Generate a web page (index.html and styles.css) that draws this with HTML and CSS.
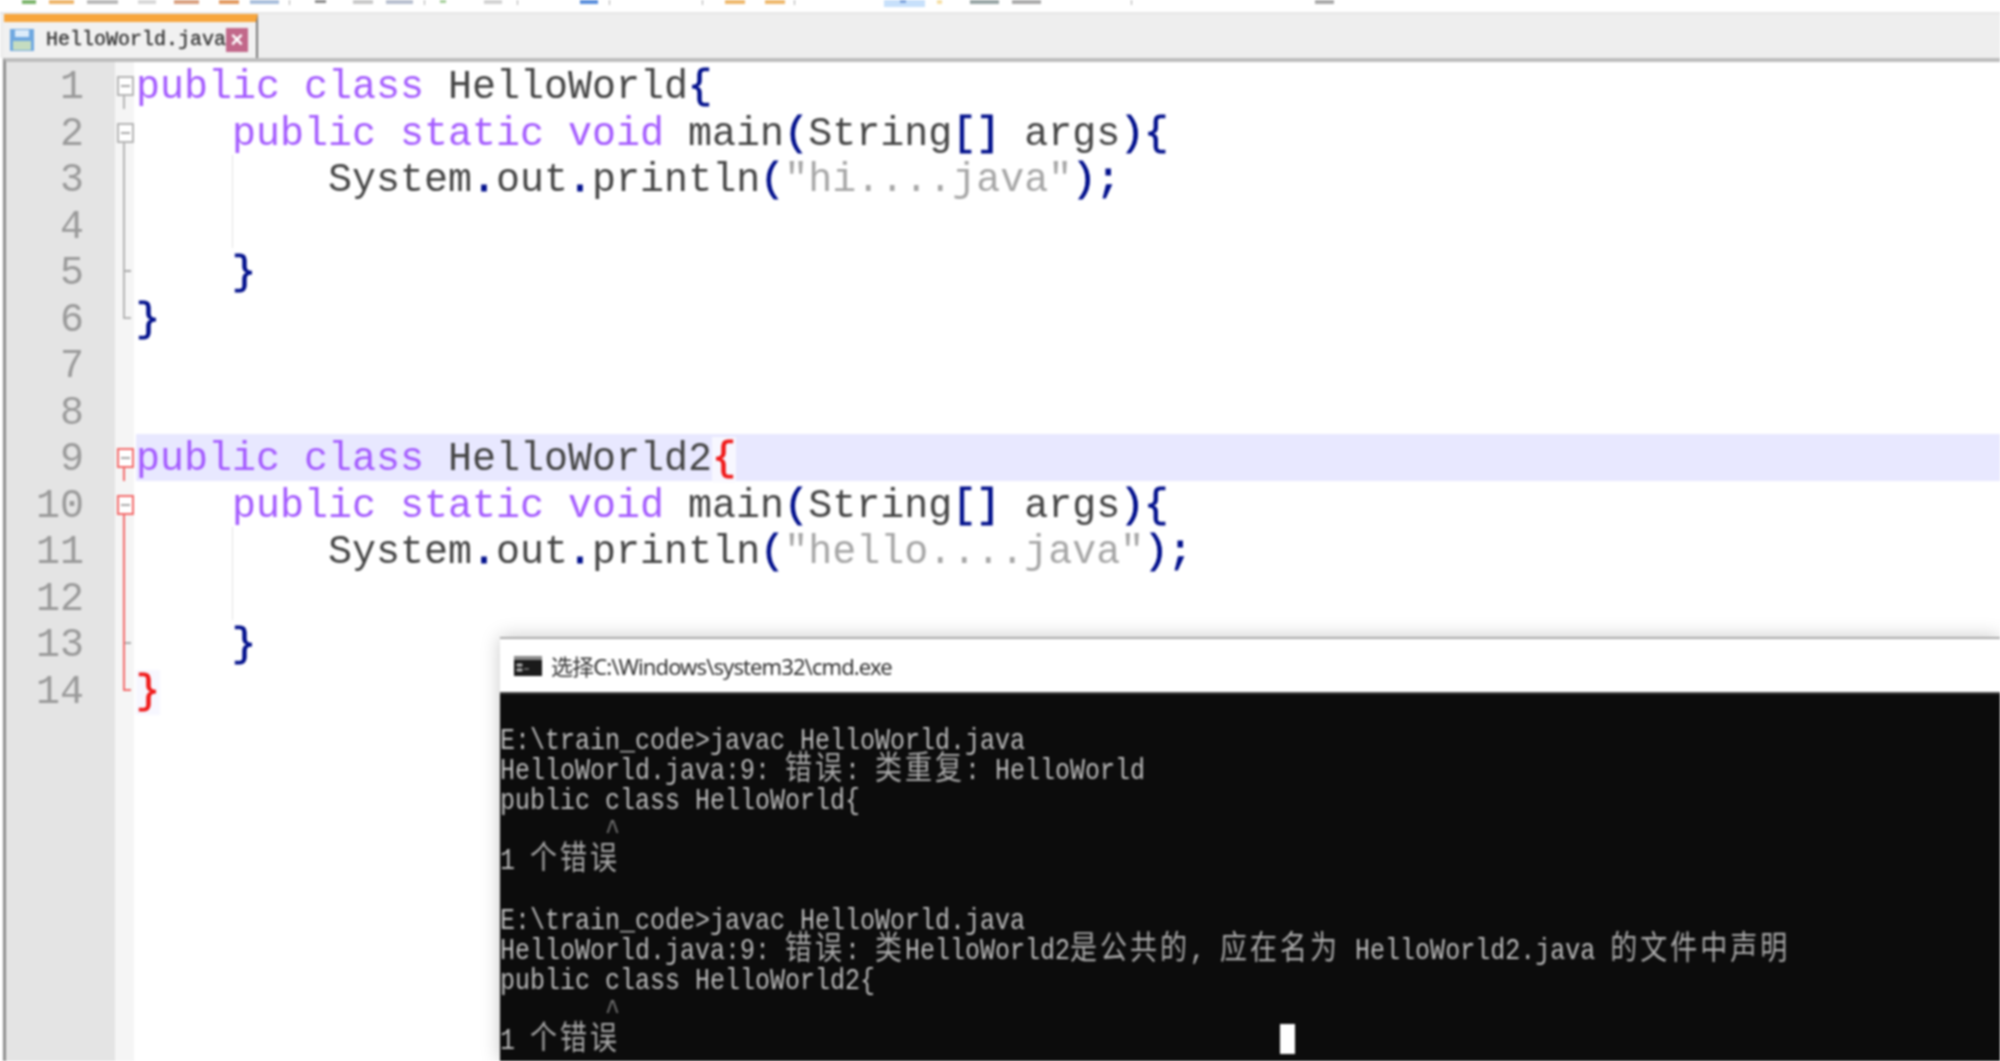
FILE: index.html
```html
<!DOCTYPE html>
<html lang="zh">
<head>
<meta charset="utf-8">
<title>HelloWorld.java</title>
<link rel="stylesheet" href="styles.css">
</head>
<body>
<div class="screen">
  <div class="toolbar">
    <svg class="toolbar-art" width="2000" height="13" viewBox="0 0 2000 13">
      <rect x="22" y="0" width="14" height="4" fill="#7cb56c"/>
      <rect x="49" y="0" width="25" height="4" fill="#eeb56a"/>
      <rect x="87" y="0" width="31" height="4" fill="#b9b9b9"/>
      <rect x="138" y="0" width="18" height="4" fill="#d8d8d8"/>
      <rect x="174" y="0" width="25" height="4" fill="#d9a080"/>
      <rect x="219" y="0" width="20" height="4" fill="#e39a60"/>
      <rect x="250" y="0" width="29" height="4" fill="#a9bfdc"/>
      <rect x="289" y="0" width="1" height="5" fill="#aaa"/>
      <rect x="315" y="0" width="11" height="3" fill="#888"/>
      <rect x="353" y="0" width="20" height="4" fill="#c8c8c8"/>
      <rect x="386" y="0" width="27" height="4" fill="#b7bfcf"/>
      <rect x="424" y="0" width="1" height="5" fill="#aaa"/>
      <rect x="440" y="0" width="6" height="3" fill="#a5cf9a"/>
      <rect x="484" y="0" width="18" height="4" fill="#d2d2d2"/>
      <rect x="517" y="0" width="1" height="5" fill="#aaa"/>
      <rect x="580" y="0" width="18" height="4" fill="#5a8fdc"/>
      <rect x="609" y="0" width="1" height="5" fill="#aaa"/>
      <rect x="702" y="0" width="1" height="5" fill="#aaa"/>
      <rect x="725" y="0" width="20" height="4" fill="#efb86c"/>
      <rect x="765" y="0" width="20" height="4" fill="#efb86c"/>
      <rect x="794" y="0" width="1" height="5" fill="#aaa"/>
      <rect x="884" y="0" width="41" height="7" fill="#c7e0fb"/>
      <rect x="900" y="0" width="6" height="3" fill="#7ea4dd"/>
      <rect x="937" y="0" width="5" height="4" fill="#f6dfa4"/>
      <rect x="970" y="0" width="29" height="4" fill="#97a5a5"/>
      <rect x="1012" y="0" width="29" height="4" fill="#aaaaaa"/>
      <rect x="1131" y="0" width="1" height="5" fill="#aaa"/>
      <rect x="1315" y="0" width="19" height="4" fill="#a9a9a9"/>
    </svg>
  </div>
  <div class="tabbar">
    <div class="tab">
      <svg class="tab-icon" width="24" height="22" viewBox="0 0 24 22">
        <rect x="0" y="0" width="24" height="22" fill="#6fa8e0"/>
        <rect x="5" y="1" width="14" height="7" fill="#dcecfa"/>
        <rect x="3" y="12" width="18" height="9" fill="#c5dcc0"/>
      </svg>
      <span class="tab-name">HelloWorld.java</span>
      <span class="tab-close">×</span>
    </div>
  </div>
  <div class="editor">
    <div class="row"><span class="num">1</span><span class="fold box first"></span><span class="code"><span class="k">public class</span> HelloWorld<span class="o">{</span></span></div>
    <div class="row"><span class="num">2</span><span class="fold box"></span><span class="code">    <span class="k">public static void</span> main<span class="o">(</span>String<span class="o">[]</span> args<span class="o">){</span></span></div>
    <div class="row"><span class="num">3</span><span class="fold line"></span><span class="code guide">        System<span class="o">.</span>out<span class="o">.</span>println<span class="o">(</span><span class="s">"hi....java"</span><span class="o">);</span></span></div>
    <div class="row"><span class="num">4</span><span class="fold line"></span><span class="code guide"> </span></div>
    <div class="row"><span class="num">5</span><span class="fold tee"></span><span class="code">    <span class="o">}</span></span></div>
    <div class="row"><span class="num">6</span><span class="fold end"></span><span class="code"><span class="o">}</span></span></div>
    <div class="row"><span class="num">7</span><span class="fold"></span><span class="code"> </span></div>
    <div class="row"><span class="num">8</span><span class="fold"></span><span class="code"> </span></div>
    <div class="row"><span class="num">9</span><span class="fold box first red"></span><span class="code current"><span class="k">public class</span> HelloWorld2<span class="r">{</span></span></div>
    <div class="row"><span class="num">10</span><span class="fold box red"></span><span class="code">    <span class="k">public static void</span> main<span class="o">(</span>String<span class="o">[]</span> args<span class="o">){</span></span></div>
    <div class="row"><span class="num">11</span><span class="fold line red"></span><span class="code guide">        System<span class="o">.</span>out<span class="o">.</span>println<span class="o">(</span><span class="s">"hello....java"</span><span class="o">);</span></span></div>
    <div class="row"><span class="num">12</span><span class="fold line red"></span><span class="code guide"> </span></div>
    <div class="row"><span class="num">13</span><span class="fold tee red"></span><span class="code">    <span class="o">}</span></span></div>
    <div class="row"><span class="num">14</span><span class="fold end red"></span><span class="code"><span class="r">}</span></span></div>
  </div>
  <div class="cmd">
    <div class="cmd-title">
      <svg class="cmd-icon" width="28" height="20" viewBox="0 0 28 20">
        <rect width="28" height="20" fill="#1a1a1a"/>
        <rect width="28" height="4" fill="#8a8a8a"/>
        <path d="M3 8h5v2H3zM3 13h5v2H3zM10 13h5" fill="#b5b5b5" stroke="#b5b5b5" stroke-width="1"/>
      </svg>
      <span class="cmd-name">选择C:\Windows\system32\cmd.exe</span>
    </div>
    <div class="console">
      <div class="cline"> </div>
      <div class="cline">E:\train_code&gt;javac HelloWorld.java</div>
      <div class="cline">HelloWorld.java:9: <span class="zh">错误</span>: <span class="zh">类重复</span>: HelloWorld</div>
      <div class="cline">public class HelloWorld{</div>
      <div class="cline dim">       ^</div>
      <div class="cline">1 <span class="zh">个错误</span></div>
      <div class="cline"> </div>
      <div class="cline">E:\train_code&gt;javac HelloWorld.java</div>
      <div class="cline">HelloWorld.java:9: <span class="zh">错误</span>: <span class="zh">类</span>HelloWorld2<span class="zh">是公共的</span>, <span class="zh">应在名为</span> HelloWorld2.java <span class="zh">的文件中声明</span></div>
      <div class="cline">public class HelloWorld2{</div>
      <div class="cline dim">       ^</div>
      <div class="cline">1 <span class="zh">个错误</span>                                            <span class="caret"></span></div>
    </div>
  </div>
</div>
</body>
</html>
```
FILE: styles.css
```css
html, body {
  margin: 0;
  padding: 0;
  width: 2000px;
  height: 1061px;
  overflow: hidden;
  background: #fff;
}

.screen {
  position: relative;
  width: 2000px;
  height: 1061px;
  overflow: hidden;
  display: flex;
  flex-direction: column;
  background: #fff;
  filter: blur(1px);
}

.toolbar {
  height: 12px;
  flex: none;
  background: #fff;
  border-bottom: 2px solid #e6e6e6;
  overflow: hidden;
}

.toolbar-art {
  display: block;
}

.tabbar {
  height: 44px;
  flex: none;
  display: flex;
  background: #eeeeee;
  padding-left: 4px;
}

.tab {
  width: 254px;
  box-sizing: border-box;
  border-top: 8px solid #f8a63c;
  border-right: 2px solid #777;
  background: #f1f1f1;
  display: flex;
  align-items: center;
  padding-left: 6px;
}

.tab-icon {
  flex: none;
}

.tab-name {
  margin-left: 12px;
  font: 20px/1 "Liberation Mono", monospace;
  color: #333;
  -webkit-text-stroke: 0.3px #333;
}

.tab-close {
  width: 22px;
  height: 24px;
  flex: none;
  background: #c2688a;
  color: #fff;
  font: 700 22px/24px "Liberation Sans", sans-serif;
  text-align: center;
}

.editor {
  flex: 1;
  border-top: 4px solid #bdbdbd;
  border-left: 3px solid #8e8e8e;
  margin-left: 3px;
  background: linear-gradient(to right, #e4e4e4 0 109px, #f5f5f5 109px 128px, #fff 128px);
  font: 40px/52px "Liberation Mono", monospace;
}

.row {
  height: 46.5px;
  display: flex;
}

.num {
  width: 78px;
  padding-right: 31px;
  flex: none;
  text-align: right;
  color: #9a9a9a;
}

.fold {
  width: 22px;
  flex: none;
  position: relative;
  --fold: #b4b4b4;
}

.fold.red {
  --fold: #f26a6a;
}

.fold.box::before {
  content: "";
  position: absolute;
  left: 2px;
  top: 14px;
  width: 13px;
  height: 16px;
  border: 2px solid var(--fold);
  background: linear-gradient(#aaa, #aaa) center / 9px 2px no-repeat, #fff;
}

.fold.box::after {
  content: "";
  position: absolute;
  left: 8px;
  top: 34px;
  bottom: 0;
  border-left: 2px solid var(--fold);
}

.fold.line::before,
.fold.tee::before {
  content: "";
  position: absolute;
  left: 8px;
  top: 0;
  bottom: 0;
  border-left: 2px solid var(--fold);
}

.fold.tee::after {
  content: "";
  position: absolute;
  left: 10px;
  top: 22px;
  width: 6px;
  border-top: 2px solid #aaa;
}

.fold.end::before {
  content: "";
  position: absolute;
  left: 8px;
  top: 0;
  height: 22px;
  width: 6px;
  border-left: 2px solid var(--fold);
  border-bottom: 2px solid var(--fold);
}

.code {
  flex: 1;
  white-space: pre;
  color: #444;
  margin-left: -1px;
}

.code.guide {
  background: linear-gradient(#e2e2e2, #e2e2e2) 96px 0 / 1px 100% no-repeat;
}

.code.current {
  background: linear-gradient(#e8e8ff, #e8e8ff);
}

.k {
  color: #a45bff;
}

.o {
  color: #000f8c;
  -webkit-text-stroke: 0.9px #000f8c;
}

.s {
  color: #a6a6a6;
}

.r {
  color: #f01818;
  -webkit-text-stroke: 0.9px #f01818;
  background: #f7f7ff;
}

.cmd {
  position: absolute;
  left: 500px;
  top: 637px;
  right: 0;
  bottom: 0;
  border-top: 2px solid #aaa;
  box-shadow: 0 0 18px rgba(0, 0, 0, 0.22);
  background: #0c0c0c;
  display: flex;
  flex-direction: column;
}

.cmd-title {
  height: 55px;
  flex: none;
  box-sizing: border-box;
  display: flex;
  align-items: center;
  gap: 9px;
  padding-left: 14px;
  background: #fff;
  border-bottom: 2px solid #444;
}

.cmd-icon {
  flex: none;
}

.cmd-name {
  font: 22px/1 "Noto Sans", "Noto Sans CJK SC", sans-serif;
  letter-spacing: -0.9px;
  color: #333;
}

.console {
  padding-top: 2px;
  color: #bcbcbc;
  font: 25px/25px "Liberation Mono", "Noto Sans CJK SC", monospace;
  transform: scaleY(1.2);
  transform-origin: 0 0;
}

.cline {
  height: 25px;
  white-space: pre;
}

.dim {
  color: #777;
}

.zh {
  font: 27px/0 "Noto Sans CJK SC", sans-serif;
  letter-spacing: 3px;
  color: #aaa;
}

.caret {
  display: inline-block;
  width: 15px;
  height: 25px;
  margin-top: -2px;
  vertical-align: top;
  background: #fff;
}
```
